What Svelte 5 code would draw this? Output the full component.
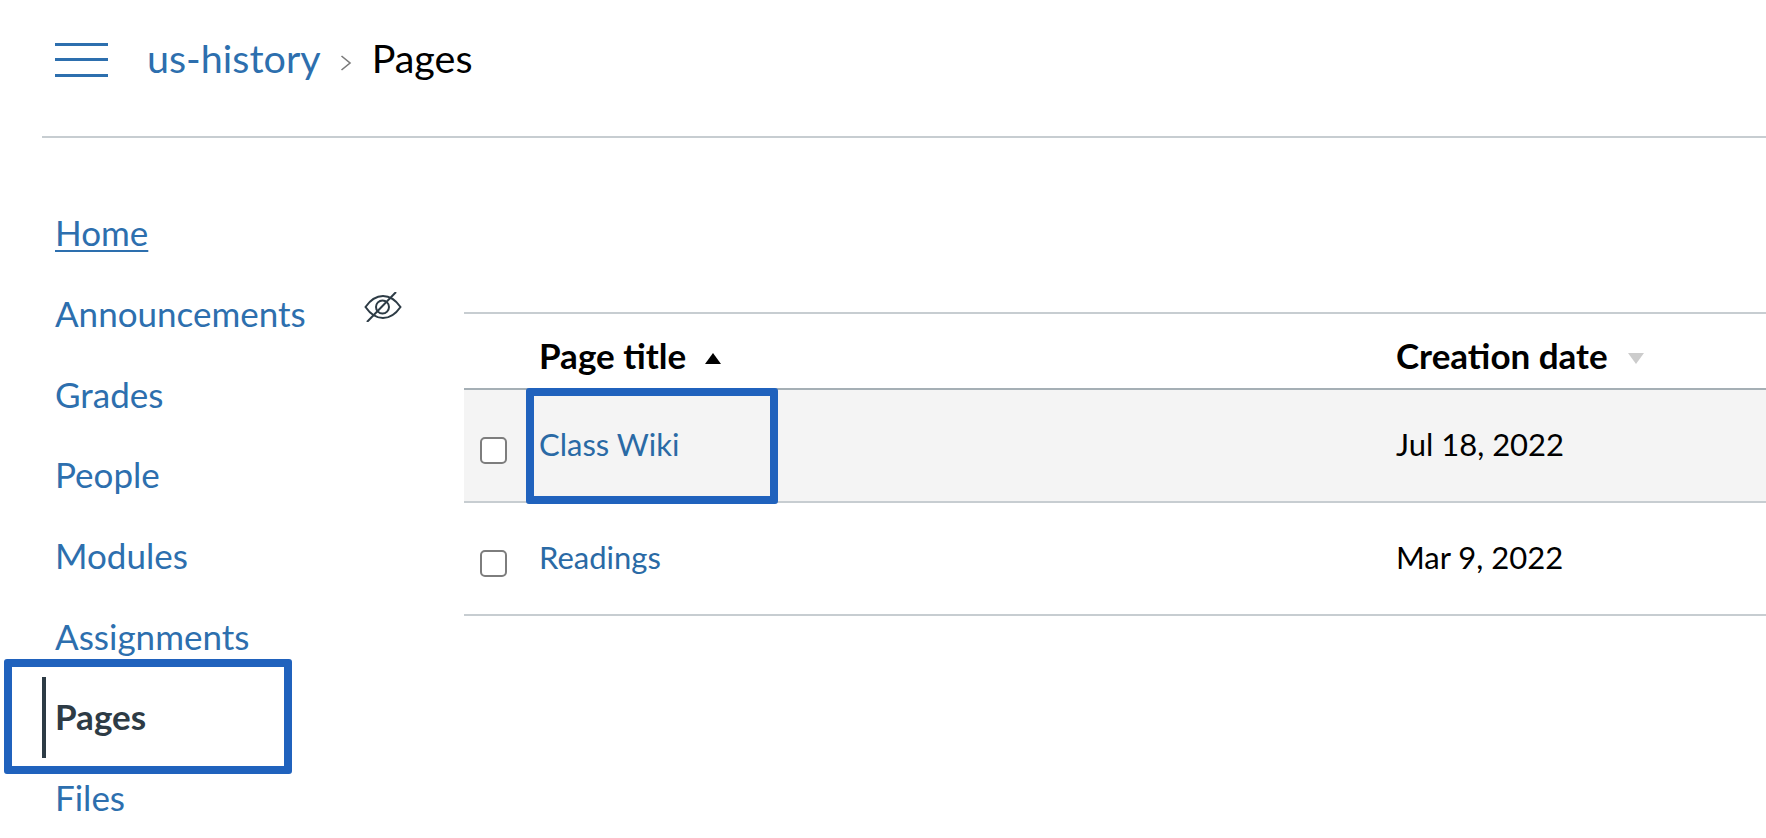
<script>
    const navItems = [
        { label: "Home", underline: true },
        { label: "Announcements", hidden: true },
        { label: "Grades" },
        { label: "People" },
        { label: "Modules" },
        { label: "Assignments" },
        { label: "Pages", active: true },
        { label: "Files" },
    ];

    const pages = [
        { title: "Class Wiki", date: "Jul 18, 2022", hover: true },
        { title: "Readings", date: "Mar 9, 2022" },
    ];
</script>

<div class="page">
    <header class="topbar">
        <button class="menu" aria-label="Menu">
            <span></span>
            <span></span>
            <span></span>
        </button>
        <nav class="crumbs">
            <a href="#top">us-history</a>
            <svg class="sep" width="12" height="18" viewBox="0 0 12 18">
                <path d="M1.5 2 L10 9 L1.5 16" fill="none" stroke="#7a7a7a" stroke-width="1.6" />
            </svg>
            <span class="current">Pages</span>
        </nav>
    </header>

    <div class="body">
        <ul class="sidenav">
            {#each navItems as item}
                <li class:active={item.active}>
                    <a href="#top" class:underline={item.underline}>{item.label}</a>
                    {#if item.hidden}
                        <svg class="eye" width="38" height="30" viewBox="0 0 38 30">
                            <path d="M1.500 15 C7 7 13 4 19 4 C25 4 31 7 36.500 15 C31 23 25 26 19 26 C13 26 7 23 1.500 15 Z" fill="none" stroke="#2d3b45" stroke-width="2" />
                            <circle cx="18.500" cy="15" r="6.500" fill="none" stroke="#2d3b45" stroke-width="2" />
                            <path d="M3 30 L32 0" fill="none" stroke="#2d3b45" stroke-width="2" />
                        </svg>
                    {/if}
                </li>
            {/each}
        </ul>

        <main class="content">
            <div class="table">
                <div class="row head">
                    <div class="check"></div>
                    <div class="title">
                        Page title
                        <svg class="sort" width="16" height="11" viewBox="0 0 16 11"><path d="M8 0 L16 11 L0 11 Z" fill="#000" /></svg>
                    </div>
                    <div class="date">
                        Creation date
                        <svg class="sort down" width="16" height="11" viewBox="0 0 16 11"><path d="M0 0 L16 0 L8 11 Z" fill="#ccc" /></svg>
                    </div>
                </div>
                {#each pages as p}
                    <div class="row" class:hover={p.hover}>
                        <div class="check"><span class="box"></span></div>
                        <div class="title">
                            <a href="#top">{p.title}</a>
                            {#if p.hover}<span class="callout"></span>{/if}
                        </div>
                        <div class="date">{p.date}</div>
                    </div>
                {/each}
            </div>
        </main>
    </div>
</div>

<style>
    :global(body) {
        background: #fff;
        overflow: hidden;
    }

    .page {
        width: 1766px;
        height: 838px;
        overflow: hidden;
        font-family: Lato, "Liberation Sans", sans-serif;
        font-variant-ligatures: common-ligatures;
        text-rendering: optimizeLegibility;
        color: #000;
    }

    a {
        color: #2d6fae;
        text-decoration: none;
    }

    .topbar {
        display: flex;
        align-items: center;
        height: 138px;
        margin-left: 42px;
        padding-left: 13px;
        padding-bottom: 17px;
        box-sizing: border-box;
        border-bottom: 2px solid #c7cdd1;
    }

    .menu {
        display: flex;
        flex-direction: column;
        gap: 12.500px;
        width: 53px;
        padding: 0;
        border: 0;
        background: none;
        margin-right: 39px;
    }

    .menu span {
        display: block;
        height: 3px;
        background: #2d6fae;
    }

    .crumbs {
        display: flex;
        align-items: center;
        font-size: 39.500px;
        margin-top: -4px;
    }

    .sep {
        margin: 10px 20px 0 19px;
    }

    .body {
        display: flex;
    }

    .sidenav {
        list-style: none;
        margin: 0;
        padding: 54px 0 0 0;
        width: 464px;
        flex: none;
    }

    .sidenav li {
        position: relative;
        height: 80.700px;
        padding-left: 55px;
        display: flex;
        align-items: center;
        font-size: 35px;
        box-sizing: border-box;
    }

    .sidenav a.underline {
        text-decoration: underline;
        text-underline-offset: 4px;
        text-decoration-thickness: 2px;
    }

    .sidenav li.active a {
        color: #2d3b45;
        font-weight: 700;
    }

    .sidenav li.active::before {
        content: "";
        position: absolute;
        left: 42px;
        top: 1px;
        width: 4px;
        height: 81px;
        background: #2d3b45;
    }

    /* annotation box over the active item */
    .sidenav li.active::after {
        content: "";
        position: absolute;
        left: 4px;
        top: -17px;
        width: 288px;
        height: 115px;
        box-sizing: border-box;
        border: 8px solid #2062bd;
        border-radius: 3px;
    }

    .eye {
        position: absolute;
        left: 364px;
        top: 19px;
    }

    .content {
        flex: 1;
        padding-top: 174px;
    }

    .table {
        border-top: 2px solid #c7cdd1;
    }

    .row {
        display: flex;
        align-items: center;
        height: 113px;
        box-sizing: border-box;
        border-bottom: 2px solid #c7cdd1;
        font-size: 31px;
        padding-bottom: 4px;
    }

    .row.hover {
        background: #f4f4f4;
    }

    .row.head {
        height: 76px;
        padding-top: 7px;
        padding-bottom: 0;
        border-bottom-color: #a5afb5;
        font-size: 35px;
        font-weight: 700;
    }

    .check {
        width: 75px;
        flex: none;
        display: flex;
        padding-left: 16px;
        box-sizing: border-box;
    }

    .box {
        width: 27px;
        height: 27px;
        margin-top: 14px;
        box-sizing: border-box;
        border: 2px solid #7d7d7d;
        border-radius: 5px;
        background: #fff;
    }

    .row:not(.head) .title a {
        color: #2a6aa5;
    }

    .title {
        position: relative;
        width: 857px;
        flex: none;
    }

    .callout {
        position: absolute;
        left: -13px;
        top: -37px;
        width: 252px;
        height: 116px;
        box-sizing: border-box;
        border: 8px solid #2062bd;
        border-radius: 3px;
    }

    .sort {
        margin-left: 10px;
        vertical-align: 5px;
    }

    .sort.down {
        margin-left: 12px;
    }
</style>
